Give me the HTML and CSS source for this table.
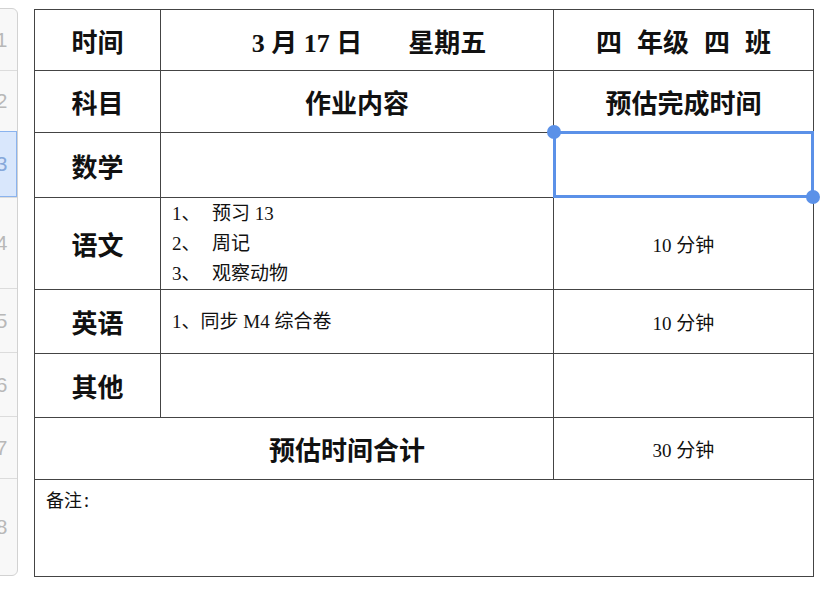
FILE: index.html
```html
<!DOCTYPE html>
<html lang="zh">
<head>
<meta charset="utf-8">
<link rel="stylesheet" href="styles.css">
</head>
<body>
<div class="page">
  <div class="rownums">
    <div class="rn r1">1</div>
    <div class="rn r2">2</div>
    <div class="rn r3 sel">3</div>
    <div class="rn r4">4</div>
    <div class="rn r5">5</div>
    <div class="rn r6">6</div>
    <div class="rn r7">7</div>
    <div class="rn r8">8</div>
  </div>
  <table class="sheet">
    <colgroup>
      <col class="c1"><col class="c2"><col class="c3">
    </colgroup>
    <tr class="h1">
      <td class="head">时间</td>
      <td class="head date">3 月 17 日<span class="gap"></span>星期五</td>
      <td class="head"><span class="sp">四</span><span class="sp">年级</span><span class="sp">四</span>班</td>
    </tr>
    <tr class="h2">
      <td class="head">科目</td>
      <td class="head">作业内容</td>
      <td class="head">预估完成时间</td>
    </tr>
    <tr class="h3">
      <td class="head">数学</td>
      <td></td>
      <td class="selcell"><div class="selbox"></div><div class="knob tl"></div><div class="knob br"></div></td>
    </tr>
    <tr class="h4">
      <td class="head">语文</td>
      <td class="list">
        <div class="li"><span class="num">1、</span>预习 13</div>
        <div class="li"><span class="num">2、</span>周记</div>
        <div class="li"><span class="num">3、</span>观察动物</div>
      </td>
      <td class="val">10 分钟</td>
    </tr>
    <tr class="h5">
      <td class="head">英语</td>
      <td class="list"><div class="li">1、同步 M4 综合卷</div></td>
      <td class="val">10 分钟</td>
    </tr>
    <tr class="h6">
      <td class="head">其他</td>
      <td></td>
      <td></td>
    </tr>
    <tr class="h7">
      <td class="head total" colspan="2">预估时间合计</td>
      <td class="val">30 分钟</td>
    </tr>
    <tr class="h8">
      <td class="note" colspan="3">备注<span class="colon">:</span></td>
    </tr>
  </table>
</div>
</body>
</html>
```
FILE: styles.css
```css
html, body {
  margin: 0;
  padding: 0;
  background: #ffffff;
}
.page {
  display: flex;
  align-items: flex-start;
  padding-top: 8px;
}
.rownums {
  margin-left: -15px;
  width: 31px;
  display: flex;
  flex-direction: column;
  background: #f8f8f8;
  border: 1px solid #d2d2d2;
  border-radius: 6px;
  flex-shrink: 0;
}
.rn {
  display: flex;
  align-items: center;
  justify-content: center;
  font-family: "Liberation Sans", Arial, sans-serif;
  font-size: 21px;
  color: #b8b8b8;
  border-top: 1px solid #dcdcdc;
  box-sizing: border-box;
}
.r1 { border-top: none; height: 61px; }
.r2 { height: 61px; }
.r3 { height: 66px; }
.r4 { height: 91px; }
.r5 { height: 64px; }
.r6 { height: 64px; }
.r7 { height: 62px; }
.r8 { height: 97px; border-bottom-left-radius: 6px; border-bottom-right-radius: 6px; }
.rn.sel {
  background: #d9e7fc;
  border: 1px solid #8ab3ee;
  color: #86a8da;
}
.sheet {
  margin-left: 16px;
  margin-top: 1px;
  border-collapse: collapse;
  table-layout: fixed;
  width: 779px;
  color: #111;
}
.c1 { width: 126px; }
.c2 { width: 393px; }
.c3 { width: 260px; }
.sheet td {
  border: 1px solid #444;
  padding: 0;
  vertical-align: middle;
  text-align: center;
}
.h1 { height: 61px; }
.h2 { height: 62px; }
.h3 { height: 65px; }
.h4 { height: 92px; }
.h5 { height: 64px; }
.h6 { height: 64px; }
.h7 { height: 62px; }
.h8 { height: 97px; }
.head {
  font-family: "Noto Sans CJK SC", sans-serif;
  font-weight: 700;
  font-size: 26px;
}
.date {
  font-family: "Liberation Serif", "Noto Sans CJK SC", serif;
  padding-left: 24px !important;
}
.total {
  padding-left: 106px !important;
}
.gap {
  display: inline-block;
  width: 46px;
}
.sp {
  margin-right: 15px;
}
.list {
  text-align: left !important;
  padding-left: 11px !important;
  font-family: "Liberation Serif", "Noto Sans CJK SC", serif;
  font-size: 19px;
}
.li {
  line-height: 30px;
}
.num {
  display: inline-block;
  width: 40px;
}
.val {
  font-family: "Liberation Serif", "Noto Sans CJK SC", serif;
  font-size: 19px;
}
.note {
  text-align: left !important;
  vertical-align: top !important;
  padding: 6px 0 0 11px !important;
  font-family: "Noto Sans CJK SC", sans-serif;
  font-size: 18px;
}
.colon {
  margin-left: 2px;
}
.selcell {
  position: relative;
}
.selbox {
  position: absolute;
  left: -1px;
  top: -2px;
  right: -1px;
  bottom: -1px;
  border: 3px solid #5b91e8;
}
.knob {
  position: absolute;
  width: 14px;
  height: 14px;
  border-radius: 50%;
  background: #5b91e8;
}
.knob.tl {
  left: -7px;
  top: -8px;
}
.knob.br {
  right: -7px;
  bottom: -7px;
}
```
